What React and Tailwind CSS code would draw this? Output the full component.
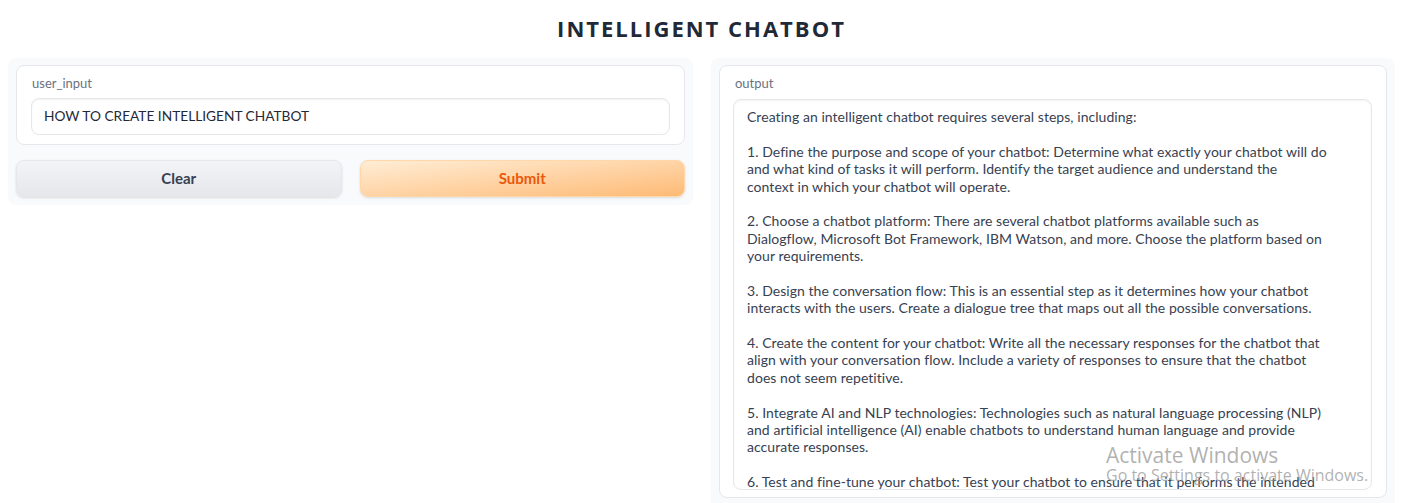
import React from 'react';

const OUTPUT_LINES = [
  'Creating an intelligent chatbot requires several steps, including:',
  '',
  '1. Define the purpose and scope of your chatbot: Determine what exactly your chatbot will do',
  'and what kind of tasks it will perform. Identify the target audience and understand the',
  'context in which your chatbot will operate.',
  '',
  '2. Choose a chatbot platform: There are several chatbot platforms available such as',
  'Dialogflow, Microsoft Bot Framework, IBM Watson, and more. Choose the platform based on',
  'your requirements.',
  '',
  '3. Design the conversation flow: This is an essential step as it determines how your chatbot',
  'interacts with the users. Create a dialogue tree that maps out all the possible conversations.',
  '',
  '4. Create the content for your chatbot: Write all the necessary responses for the chatbot that',
  'align with your conversation flow. Include a variety of responses to ensure that the chatbot',
  'does not seem repetitive.',
  '',
  '5. Integrate AI and NLP technologies: Technologies such as natural language processing (NLP)',
  'and artificial intelligence (AI) enable chatbots to understand human language and provide',
  'accurate responses.',
  '',
  '6. Test and fine-tune your chatbot: Test your chatbot to ensure that it performs the intended',
];

export default function App() {
  return (
    <div className="relative h-[503px] w-full overflow-hidden bg-white font-['Lato',sans-serif]">
      {/* titulo */}
      <h1 className="pt-[14px] text-center font-['Open_Sans',sans-serif] text-[22px] font-bold leading-[28px] tracking-[2px] text-[#1f2937]">
        INTELLIGENT CHATBOT
      </h1>

      <div className="mt-[16px] flex gap-[18px] px-[8px]">
        {/* columna izquierda */}
        <div className="w-[685px] self-start rounded-lg bg-[#f9fafb] p-[8px] pt-[7px]">
          <div className="rounded-lg border border-[#e5e7eb] bg-white px-[14px] pt-[8px] pb-[9px]">
            <div className="pl-[1px] text-[13px] leading-[18px] text-[#6b7280]">user_input</div>
            <div className="mt-[6px] flex h-[37px] items-center rounded-lg border border-[#e5e7eb] px-[12px] text-[13.7px] text-[#1f2937] shadow-[inset_0_1px_2px_rgba(0,0,0,0.05)]">
              HOW TO CREATE INTELLIGENT CHATBOT
            </div>
          </div>
          <div className="mt-[15px] flex gap-[18px]">
            <button className="h-[37px] flex-1 rounded-lg border border-[#e5e7eb] bg-gradient-to-b from-[#f3f4f6] to-[#e5e7eb] text-[15px] font-bold text-[#374151] shadow-sm">
              Clear
            </button>
            <button className="h-[37px] flex-1 rounded-lg border border-[#fed7aa] bg-gradient-to-br from-[#ffedd5] to-[#fdba74] text-[15px] font-bold text-[#ea580c] shadow-sm">
              Submit
            </button>
          </div>
        </div>

        {/* columna derecha */}
        <div className="h-[460px] flex-1 rounded-lg bg-[#f9fafb] p-[8px] pt-[7px]">
          <div className="h-[433px] rounded-lg border border-[#e5e7eb] bg-white pl-[12px] pr-[14px] pt-[8px]">
            <div className="pl-[3px] text-[13px] leading-[18px] text-[#6b7280]">output</div>
            <div className="mt-[7px] ml-[1px] h-[391px] overflow-hidden rounded-lg border border-[#e5e7eb] px-[13px] pt-[8px] text-[14px] leading-[17.4px] text-[#374151] shadow-[inset_0_1px_2px_rgba(0,0,0,0.05)]">
              {OUTPUT_LINES.map((line, i) => (
                <div key={i} className="h-[17.4px] whitespace-nowrap tracking-[0.05px]">{line}</div>
              ))}
            </div>
          </div>
        </div>
      </div>

      {/* marca de agua de Windows */}
      <div className="pointer-events-none absolute left-[1106px] top-[442px] font-['Open_Sans',sans-serif] text-[#a3a3a3]/85">
        <div className="text-[21px] leading-[26px]">Activate Windows</div>
        <div className="-mt-[2px] text-[16px] leading-[18px]">Go to Settings to activate Windows.</div>
      </div>
    </div>
  );
}
